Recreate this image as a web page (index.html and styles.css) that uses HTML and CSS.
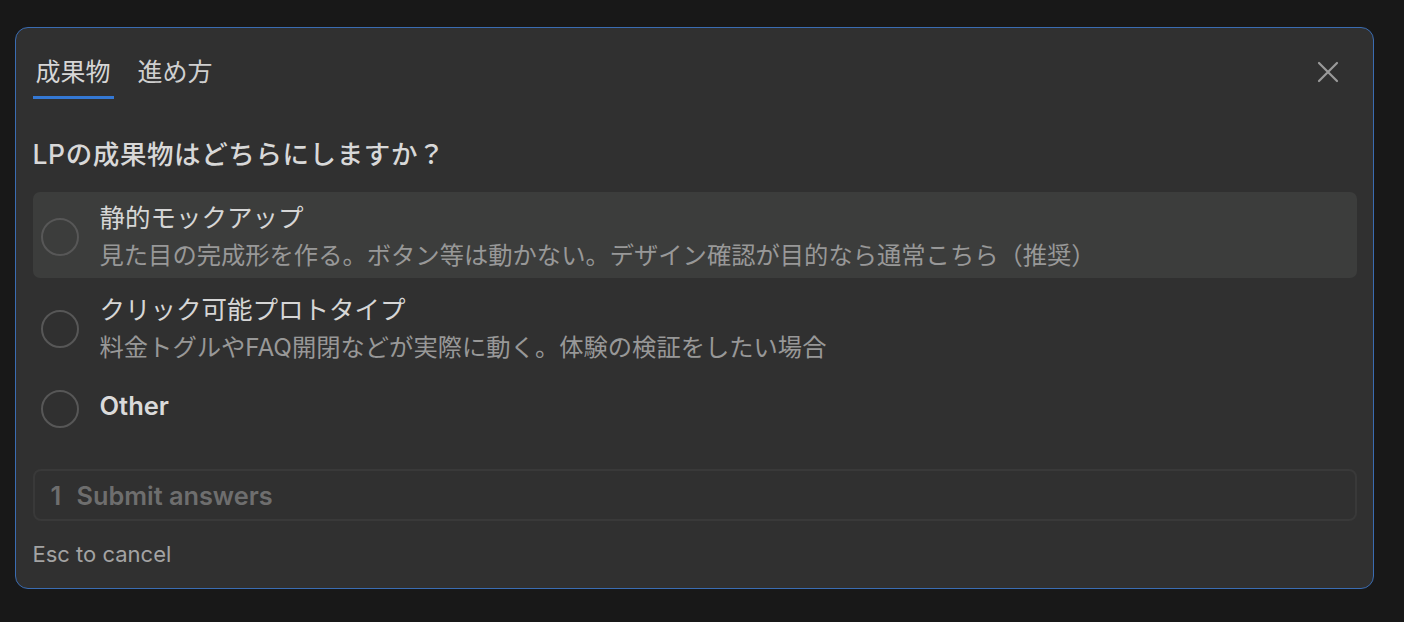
FILE: index.html
```html
<!DOCTYPE html>
<html lang="ja">
<head>
<meta charset="utf-8">
<link rel="stylesheet" href="styles.css">
</head>
<body>
<div class="card">
  <div class="header">
    <div class="tabs">
      <div class="tab active">成果物</div>
      <div class="tab">進め方</div>
    </div>
    <button class="close" aria-label="close">
      <svg width="22" height="22" viewBox="0 0 22 22"><path d="M2 2 L20 20 M20 2 L2 20" stroke="#9a9a9a" stroke-width="2.2" stroke-linecap="round" fill="none"/></svg>
    </button>
  </div>
  <div class="question">LPの成果物はどちらにしますか？</div>
  <div class="options">
    <div class="option selected">
      <span class="radio"></span>
      <div class="text">
        <div class="title">静的モックアップ</div>
        <div class="desc">見た目の完成形を作る。ボタン等は動かない。デザイン確認が目的なら通常こちら（推奨）</div>
      </div>
    </div>
    <div class="option">
      <span class="radio"></span>
      <div class="text">
        <div class="title">クリック可能プロトタイプ</div>
        <div class="desc">料金トグルやFAQ開閉などが実際に動く。体験の検証をしたい場合</div>
      </div>
    </div>
    <div class="option other">
      <span class="radio"></span>
      <div class="text">
        <div class="title bold">Other</div>
      </div>
    </div>
  </div>
  <div class="submit"><span class="num">1</span><span class="label">Submit answers</span></div>
  <div class="hint">Esc to cancel</div>
</div>
</body>
</html>
```
FILE: styles.css
```css
* { box-sizing: border-box; }
html, body { margin: 0; padding: 0; }
body {
  background: #181818;
  font-family: "Inter", "Noto Sans CJK JP", sans-serif;
  color: #d4d4d4;
  padding: 27px 30px 0 15px;
}
.card {
  width: 1359px;
  height: 562px;
  background: #303030;
  border: 1.5px solid #3a6cb2;
  border-radius: 13px;
  padding: 0 16.5px;
  display: flex;
  flex-direction: column;
}
.header {
  display: flex;
  justify-content: space-between;
  align-items: flex-start;
  padding-top: 26px;
}
.tabs { display: flex; gap: 21px; }
.tab {
  font-family: "Noto Sans CJK JP", sans-serif;
  font-size: 25px;
  line-height: 32px;
  padding: 0 3px 10px;
  border-bottom: 3px solid transparent;
  color: #cfcfcf;
}
.tab.active { border-bottom-color: #3478d4; color: #d6d6d6; }
.close {
  background: none;
  border: 0;
  padding: 0;
  margin-right: 18px;
  width: 22px;
  height: 36px;
  display: flex;
  align-items: center;
  justify-content: center;
  cursor: pointer;
}
.question {
  margin-top: 39px;
  font-size: 26.5px;
  letter-spacing: 0.6px;
  line-height: 32px;
  font-weight: 500;
  color: #d8d8d8;
}
.options {
  margin-top: 22px;
  display: flex;
  flex-direction: column;
  gap: 6px;
}
.option {
  display: flex;
  align-items: center;
  gap: 21px;
  padding: 9px 16px 5px 8px;
  border-radius: 7px;
}
.option.selected { background: #3c3d3c; }
.option.other { min-height: 62px; }
.option.other .text { padding-bottom: 6px; }
.radio {
  flex: none;
  width: 38px;
  height: 38px;
  border: 2.5px solid #575757;
  border-radius: 50%;
}
.text { display: flex; flex-direction: column; gap: 2px; }
.title {
  font-size: 25.5px;
  line-height: 34px;
  color: #d6d6d6;
}
.title.bold { font-weight: 600; color: #dadada; }
.desc {
  font-size: 24.3px;
  line-height: 36px;
  color: #989898;
}
.submit {
  margin-top: 31px;
  height: 52px;
  border: 2px solid #393939;
  border-radius: 8px;
  display: flex;
  align-items: center;
  padding-left: 16px;
  font-size: 25.3px;
  font-weight: 600;
  color: #6e6e6e;
}
.submit .num { width: 26px; }
.hint {
  margin-top: 19px;
  font-size: 22px;
  line-height: 28px;
  color: #a3a3a3;
}
```
